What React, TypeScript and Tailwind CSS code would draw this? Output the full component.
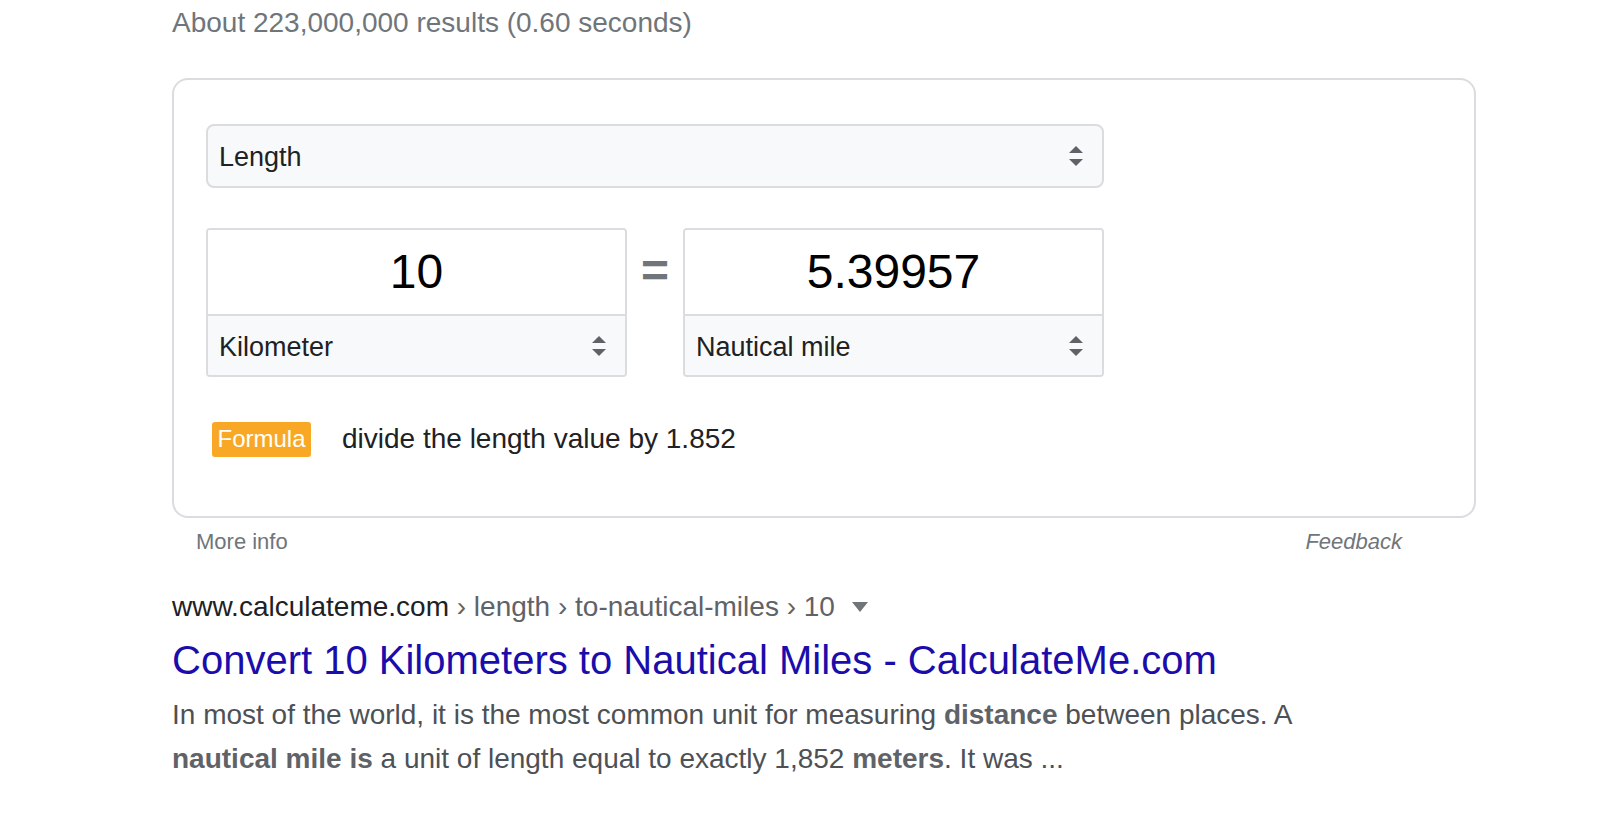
import React from "react";

const Spinner = () => (
  <svg width="14" height="20" viewBox="0 0 14 20" className="shrink-0">
    <path d="M7 0 L14 7 L0 7 Z" fill="#5f6368" />
    <path d="M0 13 L14 13 L7 20 Z" fill="#5f6368" />
  </svg>
);

const UnitBox = ({ value, unit }: { value: string; unit: string }) => (
  <div className="w-[421px] border-2 border-[#dadce0] rounded-[4px] overflow-hidden">
    <div className="h-[84px] flex items-center justify-center bg-white text-[48px] text-[#000]">
      {value}
    </div>
    <div className="h-[61px] border-t-2 border-[#dadce0] bg-[#f8f9fa] flex items-center justify-between pl-[11px] pr-[19px]">
      <span className="text-[27px] text-[#202124] pt-[4px]">{unit}</span>
      <Spinner />
    </div>
  </div>
);

export default function App() {
  return (
    <div className="min-h-screen bg-white font-['Liberation_Sans',Arial,sans-serif]">
      <div className="pl-[172px] w-[1476px]">
        <div className="pt-[1px] text-[28px] leading-[44px] text-[#70757a]">
          About 223,000,000 results (0.60 seconds)
        </div>

        <div className="mt-[33px] w-[1304px] h-[440px] border-2 border-[#dadce0] rounded-[16px] pl-[32px] pt-[44px]">
          <div className="w-[898px] h-[64px] border-2 border-[#dadce0] rounded-[8px] bg-[#f8f9fa] flex items-center justify-between pl-[11px] pr-[19px]">
            <span className="text-[27px] text-[#202124] pt-[2px]">Length</span>
            <Spinner />
          </div>

          <div className="mt-[40px] flex items-start">
            <UnitBox value="10" unit="Kilometer" />
            <div className="w-[56px] h-[86px] flex items-center justify-center text-[48px] font-bold text-[#70757a]">
              =
            </div>
            <UnitBox value="5.39957" unit="Nautical mile" />
          </div>

          <div className="mt-[41px] flex items-center">
            <span className="ml-[6px] h-[35px] w-[99px] rounded-[3px] bg-[#f9a825] text-white text-[24px] flex items-center justify-center">
              Formula
            </span>
            <span className="ml-[31px] text-[28px] text-[#202124]">
              divide the length value by 1.852
            </span>
          </div>
        </div>

        <div className="mt-[8px] w-[1304px] flex justify-between pl-[24px] pr-[74px] text-[22px] leading-[32px] text-[#70757a]">
          <span>More info</span>
          <span className="italic">Feedback</span>
        </div>

        <div className="mt-[27px] flex items-center text-[28px] leading-[44px]">
          <span className="text-[#202124]">www.calculateme.com</span>
          <span className="text-[#5f6368]">&nbsp;› length › to-nautical-miles › 10</span>
          <svg width="16" height="10" viewBox="0 0 16 10" className="ml-[17px]">
            <path d="M0 0 L16 0 L8 10 Z" fill="#70757a" />
          </svg>
        </div>

        <div className="mt-[5px] text-[40px] leading-[52px] text-[#1a0dab]">
          Convert 10 Kilometers to Nautical Miles - CalculateMe.com
        </div>

        <div className="mt-[7px] text-[28px] leading-[44px] text-[#4d5156]">
          In most of the world, it is the most common unit for measuring{" "}
          <b className="text-[#5f6368]">distance</b> between places. A
          <br />
          <b className="text-[#5f6368]">nautical mile is</b> a unit of length equal to exactly 1,852{" "}
          <b className="text-[#5f6368]">meters</b>. It was ...
        </div>
      </div>
    </div>
  );
}
